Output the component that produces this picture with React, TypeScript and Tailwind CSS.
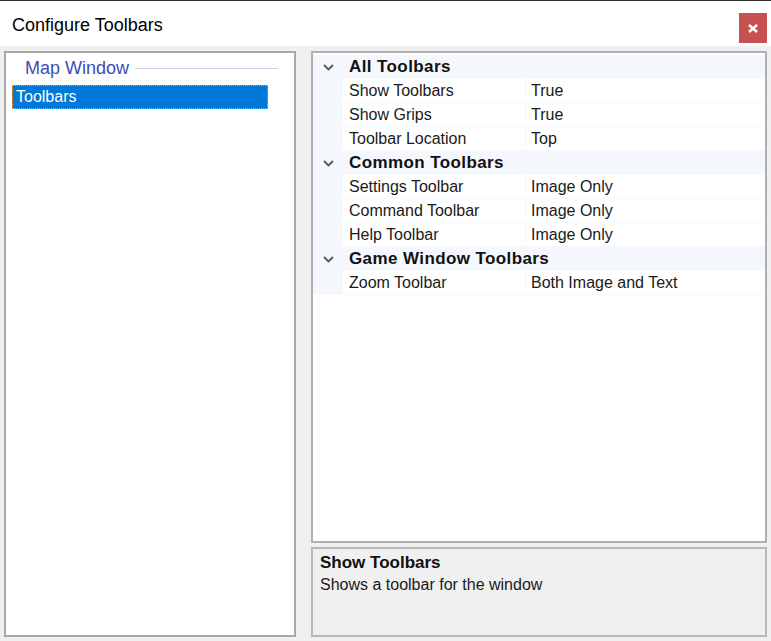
import React from "react";

const font = { fontFamily: '"Liberation Sans", Arial, sans-serif' };

function Chevron() {
  return (
    <svg width="11" height="7" viewBox="0 0 11 7" className="block">
      <polyline points="1,1 5.5,5.5 10,1" fill="none" stroke="#555" strokeWidth="1.8" />
    </svg>
  );
}

type Cat = { name: string; props: [string, string][] };

const cats: Cat[] = [
  {
    name: "All Toolbars",
    props: [
      ["Show Toolbars", "True"],
      ["Show Grips", "True"],
      ["Toolbar Location", "Top"],
    ],
  },
  {
    name: "Common Toolbars",
    props: [
      ["Settings Toolbar", "Image Only"],
      ["Command Toolbar", "Image Only"],
      ["Help Toolbar", "Image Only"],
    ],
  },
  {
    name: "Game Window Toolbars",
    props: [["Zoom Toolbar", "Both Image and Text"]],
  },
];

export default function App() {
  return (
    <div
      className="w-[771px] h-[641px] flex flex-col bg-[#f0f0f0] text-black overflow-hidden"
      style={font}
    >
      {/* Title bar */}
      <div className="h-[46px] shrink-0 bg-white border-t border-[#2e2e2e] flex items-start justify-between pl-[12px] pr-[4px]">
        <div className="pt-[12px] text-[18px] leading-[24px]">Configure Toolbars</div>
        <div className="mt-[12px] w-[28px] h-[30px] bg-[#c75050] flex items-center justify-center">
          <svg width="10" height="9" viewBox="0 0 10 9">
            <line x1="1" y1="1" x2="9" y2="8" stroke="white" strokeWidth="2.4" />
            <line x1="9" y1="1" x2="1" y2="8" stroke="white" strokeWidth="2.4" />
          </svg>
        </div>
      </div>

      {/* Body */}
      <div className="flex-1 flex gap-[15px] pl-[4px] pr-[4px] pt-[5px] pb-[4px] min-h-0">
        {/* Left list */}
        <div className="w-[292px] shrink-0 bg-white border-2 border-[#a8a8a8] pt-[3px]">
          <div className="h-[24px] flex items-center pl-[19px] pr-[16px] gap-[6px]">
            <span className="text-[18px] leading-[24px] text-[#3b4db5]">Map Window</span>
            <div className="flex-1 h-px bg-[#c9d1ea] mt-[1px]" />
          </div>
          <div className="mt-[5px] ml-[6px] w-[256px] h-[24px] bg-[#0078d7] border border-dotted border-[#e3a35c] text-white text-[16px] leading-[22px] pl-[3px]">
            Toolbars
          </div>
        </div>

        {/* Right side */}
        <div className="flex-1 flex flex-col gap-[4px] min-w-0">
          <div className="flex-1 bg-white border-2 border-[#b0b0b0] pt-[2px] min-h-0">
            {cats.map((c) => (
              <div key={c.name}>
                <div className="h-[24px] flex items-center bg-[#f4f7fc]">
                  <div className="w-[30px] shrink-0 flex justify-center pl-[1px]">
                    <Chevron />
                  </div>
                  <span className="pl-[6px] text-[17px] font-bold leading-[24px] tracking-[0.4px] text-[#111]">
                    {c.name}
                  </span>
                </div>
                {c.props.map(([n, v]) => (
                  <div key={n} className="h-[24px] flex bg-[#f4f7fc]">
                    <div className="w-[30px] shrink-0" />
                    <div className="w-[182px] shrink-0 bg-white border-b border-[#f4f7fc] pl-[6px] text-[16px] leading-[23px] text-[#1a1a1a]">
                      {n}
                    </div>
                    <div className="w-px shrink-0 bg-[#f4f7fc]" />
                    <div className="flex-1 bg-white border-b border-[#f4f7fc] pl-[5px] text-[16px] leading-[23px] text-[#1a1a1a]">
                      {v}
                    </div>
                  </div>
                ))}
              </div>
            ))}
          </div>
          <div className="h-[90px] shrink-0 bg-[#f0f0f0] border-2 border-[#b8b8b8] pt-[3px] px-[7px]">
            <div className="text-[17px] font-bold leading-[22px] text-[#111]">Show Toolbars</div>
            <div className="text-[16px] leading-[22px] text-[#1a1a1a]">Shows a toolbar for the window</div>
          </div>
        </div>
      </div>
    </div>
  );
}
